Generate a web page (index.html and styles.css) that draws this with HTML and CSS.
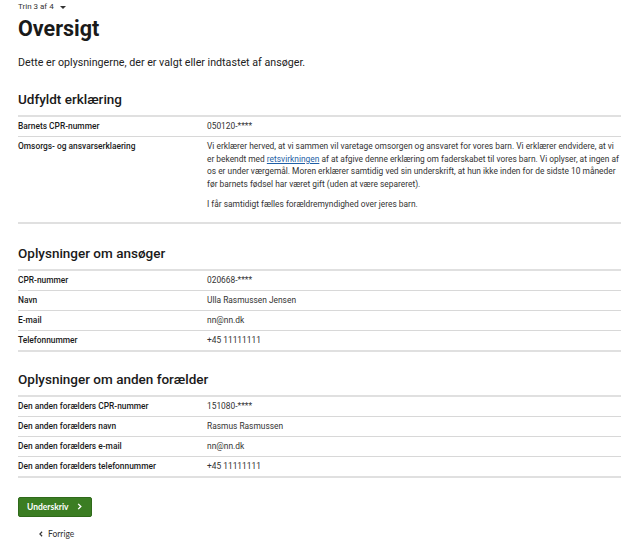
FILE: index.html
```html
<!DOCTYPE html>
<html lang="da">
<head>
<meta charset="utf-8">
<title>Oversigt</title>
<link rel="stylesheet" href="styles.css">
</head>
<body>
<main class="page">
  <div class="step">Trin 3 af 4 <span class="caret"></span></div>
  <h1 class="title">Oversigt</h1>
  <p class="intro">Dette er oplysningerne, der er valgt eller indtastet af ansøger.</p>

  <section class="section">
    <h2 class="section-title">Udfyldt erklæring</h2>
    <dl class="list">
      <div class="row"><dt>Barnets CPR-nummer</dt><dd>050120-****</dd></div>
      <div class="row"><dt>Omsorgs- og ansvarserklaering</dt><dd>
        <p class="para">Vi erklærer herved, at vi sammen vil varetage omsorgen og ansvaret for vores barn. Vi erklærer endvidere, at vi er bekendt med <a href="#" class="link">retsvirkningen</a> af at afgive denne erklæring om faderskabet til vores barn. Vi oplyser, at ingen af os er under værgemål. Moren erklærer samtidig ved sin underskrift, at hun ikke inden for de sidste 10 måneder før barnets fødsel har været gift (uden at være separeret).</p>
        <p class="para">I får samtidigt fælles forældremyndighed over jeres barn.</p>
      </dd></div>
    </dl>
  </section>

  <section class="section">
    <h2 class="section-title">Oplysninger om ansøger</h2>
    <dl class="list">
      <div class="row"><dt>CPR-nummer</dt><dd>020668-****</dd></div>
      <div class="row"><dt>Navn</dt><dd>Ulla Rasmussen Jensen</dd></div>
      <div class="row"><dt>E-mail</dt><dd>nn@nn.dk</dd></div>
      <div class="row"><dt>Telefonnummer</dt><dd>+45 11111111</dd></div>
    </dl>
  </section>

  <section class="section section-last">
    <h2 class="section-title">Oplysninger om anden forælder</h2>
    <dl class="list">
      <div class="row"><dt>Den anden forælders CPR-nummer</dt><dd>151080-****</dd></div>
      <div class="row"><dt>Den anden forælders navn</dt><dd>Rasmus Rasmussen</dd></div>
      <div class="row"><dt>Den anden forælders e-mail</dt><dd>nn@nn.dk</dd></div>
      <div class="row"><dt>Den anden forælders telefonnummer</dt><dd>+45 11111111</dd></div>
    </dl>
  </section>

  <div class="actions">
    <button class="btn-primary"><span>Underskriv</span><svg class="chev" viewBox="0 0 8 8" width="7" height="7"><path d="M2.5 1 L5.5 4 L2.5 7" fill="none" stroke="#fff" stroke-width="1.6"/></svg></button>
    <a href="#" class="back"><svg class="chev" viewBox="0 0 8 8" width="6" height="6"><path d="M5.5 1 L2.5 4 L5.5 7" fill="none" stroke="#333" stroke-width="1.5"/></svg><span>Forrige</span></a>
  </div>
</main>
</body>
</html>
```
FILE: styles.css
```css
* { box-sizing: border-box; }
html, body { margin: 0; padding: 0; background: #fff; }
body {
  font-family: Roboto, "Open Sans", sans-serif;
  color: #1a1a1a;
}
.page {
  padding: 2px 22px 0 18px;
}
.step {
  font-size: 8px;
  line-height: 10px;
  color: #333;
  display: flex;
  align-items: center;
  gap: 4px;
}
.caret {
  width: 0; height: 0;
  border-left: 3px solid transparent;
  border-right: 3px solid transparent;
  border-top: 3px solid #333;
  margin-left: 2px;
}
.title {
  font-size: 21.5px;
  font-weight: 700;
  line-height: 26px;
  margin: 4px 0 0;
}
.intro {
  font-size: 10.7px;
  line-height: 14px;
  margin: 14px 0 0;
  color: #222;
}
.section { margin-top: 20px; }
.section-last { margin-top: 18px; }
.section-title {
  font-size: 13.5px;
  font-weight: 500;
  line-height: 18px;
  margin: 0 0 7px;
}
.list {
  margin: 0;
  border-top: 2px solid #e0e0e0;
}
.row {
  display: grid;
  grid-template-columns: 189px 1fr;
  border-bottom: 1px solid #d8d8d8;
  padding: 3px 0 4px;
  font-size: 8.4px;
  line-height: 12px;
}
.row:last-child { border-bottom: 2px solid #e0e0e0; }
dt { font-weight: 500; color: #1a1a1a; }
dd { margin: 0; color: #333; }
.para { margin: 0 0 7px; line-height: 12.7px; }
.link { color: #1f5fa6; text-decoration: underline; }
.actions {
  margin-top: 19px;
  display: flex;
  flex-direction: column;
  align-items: flex-start;
  gap: 12px;
}
.btn-primary {
  display: flex;
  align-items: center;
  gap: 7px;
  background: #3b7d23;
  border: 1px solid #2f6a1a;
  border-radius: 2px;
  color: #fff;
  font-family: Lato, Roboto, sans-serif;
  font-weight: 700;
  font-size: 8.5px;
  height: 20px;
  width: 74px;
  padding: 0 0 0 8px;
}
.chev { flex-shrink: 0; }
.back {
  display: flex;
  align-items: center;
  gap: 4px;
  margin-left: 20px;
  font-family: Lato, Roboto, sans-serif;
  font-size: 8.5px;
  line-height: 10px;
  color: #333;
  text-decoration: none;
}
```
